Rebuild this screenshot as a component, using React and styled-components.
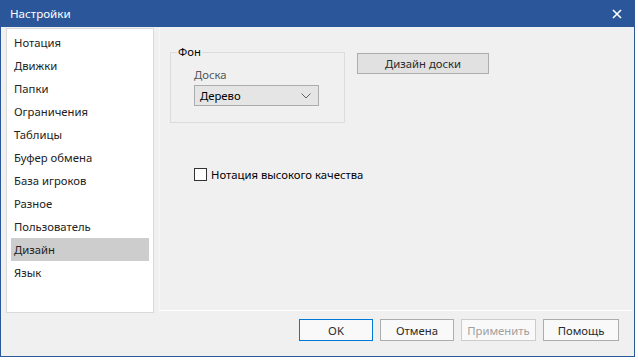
import React from "react";
import styled, { createGlobalStyle } from "styled-components";

const GlobalStyle = createGlobalStyle`
	html, body {
		margin: 0;
		padding: 0;
		background: #ffffff;
	}
	body {
		font-family: "Noto Sans", "Open Sans", "Liberation Sans", sans-serif;
		font-size: 11.3px;
		color: #1e1e1e;
	}
`;

const Window = styled.div`
	width: 635px;
	height: 357px;
	border: 1px solid #2b579a;
	border-top: 0;
	background: #f0f0f0;
	display: flex;
	flex-direction: column;
	box-sizing: border-box;
`;

const TitleBar = styled.div`
	height: 27px;
	flex: none;
	background: #2b579a;
	color: #ffffff;
	display: flex;
	align-items: center;
	justify-content: space-between;
	padding: 0 10px 0 9px;
	font-size: 11.6px;
`;

const CloseButton = styled.div`
	width: 14px;
	height: 14px;
	display: flex;
	align-items: center;
	justify-content: center;
`;

const Body = styled.div`
	display: flex;
	gap: 5px;
	padding: 1px 2px 0 5px;
	height: 285px;
`;

const SideList = styled.ul`
	list-style: none;
	margin: 0;
	width: 148px;
	padding: 2px 4px 0 4px;
	background: #ffffff;
	border: 1px solid #d9d9d9;
	box-sizing: border-box;
`;

const SideItem = styled.li`
	height: 23px;
	line-height: 23px;
	padding-left: 3px;
	color: #222;
	background: ${props => (props.selected ? "#cdcdcd" : "transparent")};
`;

const Panel = styled.div`
	flex: 1;
	height: 283px;
	background: #f0f0f0;
	border-bottom: 1px solid #ffffff;
	border-left: 1px solid #f6f6f6;
	padding: 24px 12px 0 10px;
	box-sizing: border-box;
`;

const TopRow = styled.div`
	display: flex;
	align-items: flex-start;
	gap: 12px;
`;

const GroupBox = styled.div`
	width: 175px;
	height: 71px;
	box-sizing: border-box;
	border: 1px solid #dcdcdc;
	padding: 15px 0 0 23px;
	position: relative;
`;

const Legend = styled.span`
	position: absolute;
	top: -8px;
	left: 6px;
	padding: 0 1px;
	background: #f0f0f0;
	color: #000;
	line-height: 14px;
`;

const FieldLabel = styled.div`
	color: #555555;
	line-height: 14px;
	margin-bottom: 3px;
`;

const Select = styled.div`
	width: 125px;
	height: 21px;
	box-sizing: border-box;
	background: #e5e5e5;
	border: 1px solid #acacac;
	display: flex;
	align-items: center;
	justify-content: space-between;
	padding: 0 7px 0 5px;
	color: #000;
`;

const PushButton = styled.div`
	width: ${props => props.width || 75}px;
	height: ${props => props.height || 23}px;
	box-sizing: border-box;
	background: ${props => (props.plain ? "#f9f9f9" : "#e1e1e1")};
	border: 1px solid ${props => (props.focused ? "#0078d7" : props.disabled ? "#cccccc" : "#adadad")};
	color: ${props => (props.disabled ? "#a0a0a0" : "#2a2a2a")};
	display: flex;
	align-items: center;
	justify-content: center;
	margin-top: ${props => props.offset || 0}px;
`;

const CheckRow = styled.label`
	display: flex;
	align-items: center;
	gap: 4px;
	margin: 44px 0 0 24px;
	color: #000;
`;

const CheckBox = styled.span`
	width: 13px;
	height: 13px;
	box-sizing: border-box;
	border: 1px solid #333333;
	background: #ffffff;
`;

const Footer = styled.div`
	display: flex;
	justify-content: flex-end;
	gap: 7px;
	padding: 6px 15px 0 0;
`;

const items = [
	"Нотация",
	"Движки",
	"Папки",
	"Ограничения",
	"Таблицы",
	"Буфер обмена",
	"База игроков",
	"Разное",
	"Пользователь",
	"Дизайн",
	"Язык",
];

function Chevron() {
	return (
		<svg width="10" height="6" viewBox="0 0 10 6">
			<path d="M0.5 0.5 L5 5 L9.5 0.5" fill="none" stroke="#606060" strokeWidth="1" />
		</svg>
	);
}

export default function App() {
	return (
		<>
			<GlobalStyle />
			<Window>
				<TitleBar>
					<span>Настройки</span>
					<CloseButton>
						<svg width="10" height="10" viewBox="0 0 10 10">
							<path d="M1 1 L9 9 M9 1 L1 9" stroke="#ffffff" strokeWidth="1.6" />
						</svg>
					</CloseButton>
				</TitleBar>
				<Body>
					<SideList>
						{items.map(item => (
							<SideItem key={item} selected={item === "Дизайн"}>
								{item}
							</SideItem>
						))}
					</SideList>
					<Panel>
						<TopRow>
							<GroupBox>
								<Legend>Фон</Legend>
								<FieldLabel>Доска</FieldLabel>
								<Select>
									<span>Дерево</span>
									<Chevron />
								</Select>
							</GroupBox>
							<PushButton width={132} height={21} offset={1}>
								Дизайн доски
							</PushButton>
						</TopRow>
						<CheckRow>
							<CheckBox />
							Нотация высокого качества
						</CheckRow>
					</Panel>
				</Body>
				<Footer>
					<PushButton plain focused width={74} height={22}>OK</PushButton>
					<PushButton plain width={74} height={22}>Отмена</PushButton>
					<PushButton plain disabled width={75} height={22}>Применить</PushButton>
					<PushButton plain width={76} height={22}>Помощь</PushButton>
				</Footer>
			</Window>
		</>
	);
}
